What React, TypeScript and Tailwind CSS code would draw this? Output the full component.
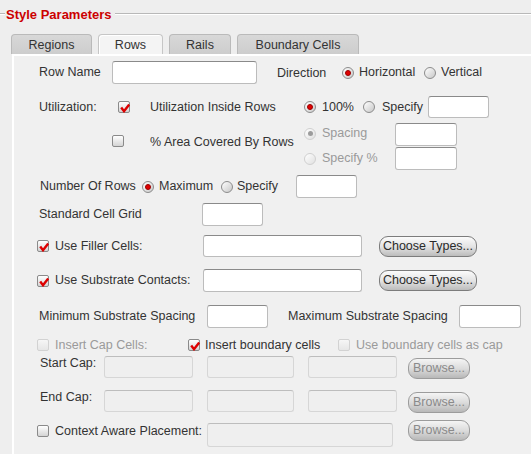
import React from "react";

function Check({ checked = false, disabled = false }: { checked?: boolean; disabled?: boolean }) {
  return (
    <span
      className={
        disabled
          ? "relative inline-block w-[12px] h-[12px] shrink-0 rounded-[2px] border border-[#d2d2d2] bg-linear-to-b from-[#f6f6f6] to-[#e6e6e6]"
          : "relative inline-block w-[12px] h-[12px] shrink-0 rounded-[2px] border border-[#8a8a8a] bg-linear-to-b from-white to-[#d4d4d4]"
      }
    >
      {checked && (
        <svg className="absolute left-[1px] top-[1px]" width="10" height="10" viewBox="0 0 10 10">
          <path d="M1.2 4.6 L4 8.2 L9.2 1.6" fill="none" stroke="#dd0000" strokeWidth="2.4" strokeLinejoin="miter" />
        </svg>
      )}
    </span>
  );
}

function Radio({ selected = false, disabled = false }: { selected?: boolean; disabled?: boolean }) {
  return (
    <span
      className={
        disabled
          ? "inline-flex items-center justify-center w-[12px] h-[12px] shrink-0 rounded-full border border-[#d0d0d0] bg-linear-to-br from-white to-[#e0e0e0]"
          : "inline-flex items-center justify-center w-[12px] h-[12px] shrink-0 rounded-full border border-[#8c8c8c] bg-linear-to-br from-white to-[#c8c8c8]"
      }
    >
      {selected && !disabled && <span className="w-[6px] h-[6px] rounded-full bg-[#e00000] border border-[#9a0000]" />}
      {selected && disabled && <span className="w-[5px] h-[5px] rounded-full bg-[#9c9c9c]" />}
    </span>
  );
}

function Field({ w, h, disabled = false }: { w: string; h: string; disabled?: boolean }) {
  return (
    <span
      className={
        (disabled
          ? "block shrink-0 rounded-[3px] border border-[#d6d6d6] border-t-[#bdbdbd] bg-[#efefef] "
          : "block shrink-0 rounded-[3px] border border-[#bcbcbc] border-t-[#8a8a8a] bg-white ") +
        w +
        " " +
        h
      }
    />
  );
}

function Btn({ label, disabled = false, w }: { label: string; disabled?: boolean; w: string }) {
  return (
    <span
      className={
        (disabled
          ? "flex shrink-0 items-center justify-center h-[21px] rounded-[9px] border border-[#9c9c9c] bg-linear-to-b from-[#f4f4f4] via-[#dcdcdc] to-[#b8b8b8] text-[#8a8a8a] "
          : "flex shrink-0 items-center justify-center h-[21px] rounded-[9px] border border-[#7c7c7c] bg-linear-to-b from-[#fbfbfb] via-[#e4e4e4] to-[#bcbcbc] text-[#2a2a2a] ") + w
      }
    >
      {label}
    </span>
  );
}

function Tab({ label, w, active = false }: { label: string; w: string; active?: boolean }) {
  return (
    <div
      className={
        (active
          ? "flex items-center justify-center pt-[2px] h-[20px] rounded-t-[4px] border border-b-0 border-[#c6c6c6] bg-[#f4f4f4] shadow-[inset_1px_1px_0_#ffffff] "
          : "flex items-center justify-center pt-[2px] h-[20px] rounded-t-[4px] border border-b-0 border-[#bababa] bg-linear-to-b from-[#d8d8d8] to-[#cdcdcd] ") + w
      }
    >
      {label}
    </div>
  );
}

export default function App() {
  return (
    <div className="w-[531px] h-[454px] overflow-hidden bg-[#eeeeee] text-[#333333] text-[12.5px] leading-none font-['Liberation_Sans',Arial,sans-serif]">
      {/* Title */}
      <div className="flex items-center h-[28px]">
        <span className="w-[5px] h-[2px] border-t border-[#b8b8b8] border-b border-b-white" />
        <span className="ml-[1px] text-[13px] font-bold text-[#cc0000]">Style Parameters</span>
        <span className="flex-1 ml-[3px] h-[2px] border-t border-[#b8b8b8] border-b border-b-white" />
      </div>

      {/* Tabs */}
      <div className="flex gap-[6px] pl-[11px] mt-[6px]">
        <Tab label="Regions" w="w-[81px]" />
        <Tab label="Rows" w="w-[65px]" active />
        <Tab label="Rails" w="w-[62px]" />
        <Tab label="Boundary Cells" w="w-[122px]" />
      </div>

      {/* Panel */}
      <div className="ml-[12px] h-[400px] border-l-2 border-t-2 border-white bg-[#f0f0f0] flex flex-col">
        {/* Row Name / Direction */}
        <div className="flex items-center h-[23px] mt-[5px]">
          <span className="ml-[25px] w-[73px] shrink-0">Row Name</span>
          <Field w="w-[145px]" h="h-[23px]" />
          <span className="ml-[20px] w-[65px] shrink-0 pt-[2px]">Direction</span>
          <Radio selected />
          <span className="ml-[5px] w-[65px] shrink-0">Horizontal</span>
          <Radio />
          <span className="ml-[5px]">Vertical</span>
        </div>

        {/* Utilization */}
        <div className="flex items-center h-[22px] mt-[12px]">
          <span className="ml-[25px] w-[79px] shrink-0">Utilization:</span>
          <Check checked />
          <span className="ml-[20px] w-[154px] shrink-0">Utilization Inside Rows</span>
          <Radio selected />
          <span className="ml-[6px] w-[41px] shrink-0">100%</span>
          <Radio />
          <span className="ml-[7px] w-[46px] shrink-0">Specify</span>
          <Field w="w-[61px]" h="h-[22px]" />
        </div>

        {/* Area covered */}
        <div className="flex items-start h-[47px] mt-[5px]">
          <div className="flex items-center h-[38px]">
            <span className="ml-[98px]">
              <Check />
            </span>
            <span className="ml-[26px] w-[154px] shrink-0">% Area Covered By Rows</span>
          </div>
          <div className="flex flex-col gap-[1px]">
            <div className="flex items-center h-[23px]">
              <span className="mb-[2px] flex items-center">
                <Radio selected disabled />
                <span className="ml-[6px] w-[73px] text-[#9a9a9a]">Spacing</span>
              </span>
              <Field w="w-[62px]" h="h-[23px]" />
            </div>
            <div className="flex items-center h-[23px]">
              <Radio disabled />
              <span className="ml-[6px] w-[73px] text-[#9a9a9a]">Specify %</span>
              <Field w="w-[62px]" h="h-[23px]" />
            </div>
          </div>
        </div>

        {/* Number of rows */}
        <div className="flex items-center h-[23px] mt-[5px]">
          <span className="ml-[26px] w-[102px] shrink-0">Number Of Rows</span>
          <Radio selected />
          <span className="ml-[5px] w-[62px] shrink-0">Maximum</span>
          <Radio />
          <span className="ml-[4px] w-[59px] shrink-0">Specify</span>
          <Field w="w-[61px]" h="h-[23px]" />
        </div>

        {/* Standard cell grid */}
        <div className="flex items-center h-[23px] mt-[5px]">
          <span className="ml-[25px] w-[163px] shrink-0">Standard Cell Grid</span>
          <Field w="w-[61px]" h="h-[23px]" />
        </div>

        {/* Filler cells */}
        <div className="flex items-center h-[22px] mt-[9px]">
          <span className="ml-[23px] flex">
            <Check checked />
          </span>
          <span className="ml-[6px] w-[148px] shrink-0">Use Filler Cells:</span>
          <Field w="w-[159px]" h="h-[22px]" />
          <span className="ml-[17px]">
            <Btn label="Choose Types..." w="w-[98px]" />
          </span>
        </div>

        {/* Substrate contacts */}
        <div className="flex items-center h-[23px] mt-[12px]">
          <span className="ml-[23px] flex">
            <Check checked />
          </span>
          <span className="ml-[6px] w-[148px] shrink-0">Use Substrate Contacts:</span>
          <Field w="w-[159px]" h="h-[23px]" />
          <span className="ml-[17px]">
            <Btn label="Choose Types..." w="w-[98px]" />
          </span>
        </div>

        {/* Substrate spacing */}
        <div className="flex items-center h-[23px] mt-[13px]">
          <span className="ml-[25px] w-[168px] shrink-0">Minimum Substrate Spacing</span>
          <Field w="w-[61px]" h="h-[23px]" />
          <span className="ml-[20px] w-[171px] shrink-0">Maximum Substrate Spacing</span>
          <Field w="w-[62px]" h="h-[23px]" />
        </div>

        {/* Cap cells */}
        <div className="flex items-center h-[22px] mt-[6px]">
          <span className="ml-[23px] flex">
            <Check disabled />
          </span>
          <span className="ml-[6px] w-[133px] shrink-0 text-[#9a9a9a]">Insert Cap Cells:</span>
          <Check checked />
          <span className="ml-[5px] w-[133px] shrink-0">Insert boundary cells</span>
          <Check disabled />
          <span className="ml-[6px] text-[#9a9a9a]">Use boundary cells as cap</span>
        </div>

        {/* Start cap */}
        <div className="flex items-center h-[22px]">
          <span className="ml-[26px] w-[64px] shrink-0 mb-[7px]">Start Cap:</span>
          <Field w="w-[89px]" h="h-[22px]" disabled />
          <span className="ml-[14px]">
            <Field w="w-[87px]" h="h-[22px]" disabled />
          </span>
          <span className="ml-[14px]">
            <Field w="w-[89px]" h="h-[22px]" disabled />
          </span>
          <span className="ml-[11px] mt-[3px]">
            <Btn label="Browse..." w="w-[62px]" disabled />
          </span>
        </div>

        {/* End cap */}
        <div className="flex items-center h-[22px] mt-[12px]">
          <span className="ml-[26px] w-[64px] shrink-0 mb-[7px]">End Cap:</span>
          <Field w="w-[89px]" h="h-[22px]" disabled />
          <span className="ml-[14px]">
            <Field w="w-[87px]" h="h-[22px]" disabled />
          </span>
          <span className="ml-[14px]">
            <Field w="w-[89px]" h="h-[22px]" disabled />
          </span>
          <span className="ml-[11px] mt-[3px]">
            <Btn label="Browse..." w="w-[62px]" disabled />
          </span>
        </div>

        {/* Context aware */}
        <div className="flex items-start h-[27px] mt-[8px]">
          <span className="ml-[23px] mt-[5px] flex">
            <Check />
          </span>
          <span className="ml-[6px] w-[152px] shrink-0 h-[22px] flex items-center">Context Aware Placement:</span>
          <span className="mt-[3px]">
            <Field w="w-[186px]" h="h-[24px]" disabled />
          </span>
          <span className="ml-[15px]">
            <Btn label="Browse..." w="w-[62px]" disabled />
          </span>
        </div>
      </div>
    </div>
  );
}
